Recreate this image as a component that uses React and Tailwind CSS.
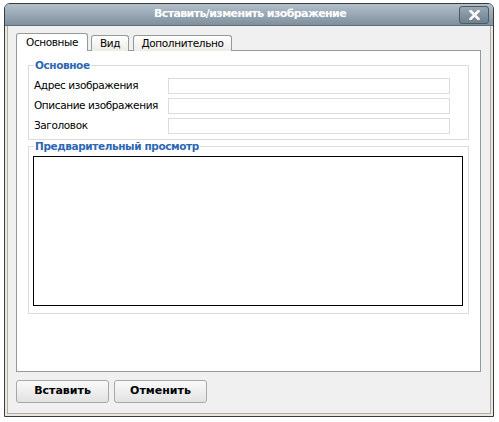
export default function App() {
  const font = { fontFamily: '"DejaVu Sans", Verdana, sans-serif' };
  return (
    <div className="w-[499px] h-[422px] bg-white relative overflow-hidden" style={font}>
      <div className="ml-[4px] mt-[3px] w-[490px] h-[414px] flex flex-col border border-[#3a3a3a] rounded-t-[6px] bg-[#ebe8e3] overflow-hidden">
        {/* title bar */}
        <div className="h-[22px] shrink-0 flex items-center relative bg-gradient-to-b from-[#b3c0cb] to-[#7f909e] border-b border-[#5d6c78]">
          <div className="flex-1 text-center text-white font-bold text-[11px] tracking-[-0.6px] pl-[36px]">
            Вставить/изменить изображение
          </div>
          <div className="mr-[4px] w-[30px] h-[18px] rounded-[3px] border border-[#4c5a66] bg-gradient-to-b from-[#9aa8b4] to-[#6f808e] flex items-center justify-center">
            <svg width="11" height="10" viewBox="0 0 11 10">
              <path d="M1.5 1 L9.5 9 M9.5 1 L1.5 9" stroke="white" strokeWidth="2.6" strokeLinecap="square" />
            </svg>
          </div>
        </div>
        {/* body */}
        <div className="flex-1 mx-[2px] mb-[2px] border-x border-b border-[#b3aca4] bg-[#f0f0f0] flex flex-col px-[8px]">
          {/* tabs */}
          <div className="flex items-end mt-[7px] h-[18px] relative z-10">
            <div className="w-[72px] h-[18px] bg-white border border-b-0 border-[#919b9c] rounded-t-[3px] flex items-center justify-center text-[10.5px] tracking-[-0.4px] text-black">
              Основные
            </div>
            <div className="ml-[3px] w-[38px] h-[16px] bg-gradient-to-b from-white to-[#ecebe6] border border-b-0 border-[#919b9c] rounded-t-[3px] flex items-center justify-center text-[10.5px] tracking-[-0.4px] text-black">
              Вид
            </div>
            <div className="ml-[4px] w-[99px] h-[16px] bg-gradient-to-b from-white to-[#ecebe6] border border-b-0 border-[#919b9c] rounded-t-[3px] flex items-center justify-center text-[10.5px] tracking-[-0.4px] text-black">
              Дополнительно
            </div>
          </div>
          {/* panel */}
          <div className="w-[465px] h-[322px] -mt-[1px] bg-white border border-[#919b9c] px-[11px] pt-[7px]">
            <fieldset className="border border-[#dcdcdc] w-[441px] h-[82px] px-[5px]">
              <legend className="px-[1px] text-[10.5px] tracking-[-0.4px] font-bold text-[#2d68b4]">Основное</legend>
              <div className="flex flex-col gap-[4px] mt-[4px]">
                {["Адрес изображения", "Описание изображения", "Заголовок"].map((l) => (
                  <div key={l} className="flex items-center h-[16px]">
                    <div className="w-[134px] text-[10.5px] tracking-[-0.4px] text-black">{l}</div>
                    <div className="w-[282px] h-[16px] border border-[#dcdcdc] bg-white"></div>
                  </div>
                ))}
              </div>
            </fieldset>
            <fieldset className="border border-[#dcdcdc] w-[441px] h-[175px] -mt-[1px] px-[3px]">
              <legend className="ml-[2px] px-[1px] text-[10.5px] tracking-[-0.4px] font-bold text-[#2d68b4]">Предварительный просмотр</legend>
              <div className="ml-[1px] w-[430px] h-[150px] border border-black bg-white mt-[1px]"></div>
            </fieldset>
          </div>
          {/* buttons */}
          <div className="flex gap-[5px] mt-[8px]">
            <button className="w-[93px] h-[23px] rounded-[3px] border border-[#a8a8a8] bg-gradient-to-b from-[#fafafa] to-[#e2e2e2] text-[11px] font-bold text-black">
              Вставить
            </button>
            <button className="w-[93px] h-[23px] rounded-[3px] border border-[#a8a8a8] bg-gradient-to-b from-[#fafafa] to-[#e2e2e2] text-[11px] font-bold text-black">
              Отменить
            </button>
          </div>
        </div>
      </div>
    </div>
  );
}
